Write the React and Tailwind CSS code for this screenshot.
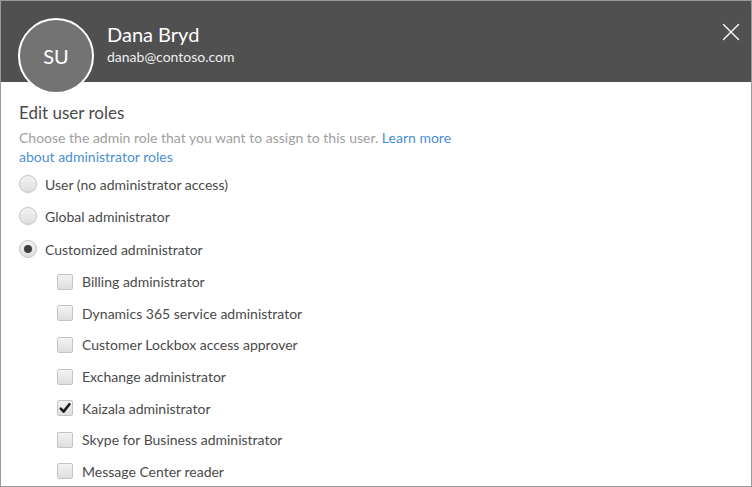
import { X } from 'lucide-react';

const roles = [
  { label: 'User (no administrator access)', checked: false },
  { label: 'Global administrator', checked: false },
  { label: 'Customized administrator', checked: true },
];

const perms = [
  { label: 'Billing administrator', checked: false },
  { label: 'Dynamics 365 service administrator', checked: false },
  { label: 'Customer Lockbox access approver', checked: false },
  { label: 'Exchange administrator', checked: false },
  { label: 'Kaizala administrator', checked: true },
  { label: 'Skype for Business administrator', checked: false },
  { label: 'Message Center reader', checked: false },
];

function Radio({ checked }) {
  return (
    <span className="w-[18px] h-[18px] rounded-full border border-[#c4c4c4] bg-gradient-to-b from-[#f3f3f3] to-[#dedede] flex items-center justify-center shrink-0">
      {checked && <span className="w-[8px] h-[8px] rounded-full bg-[#3f3f3f]" />}
    </span>
  );
}

function Checkbox({ checked }) {
  return (
    <span className="w-[16px] h-[16px] rounded-[2px] border border-[#c4c4c4] bg-gradient-to-b from-[#f3f3f3] to-[#dedede] flex items-center justify-center shrink-0">
      {checked && (
        <svg width="12" height="12" viewBox="0 0 12 12">
          <path d="M1.8 6.6 L4.6 9.6 L10.4 2.2" fill="none" stroke="#1e1e1e" strokeWidth="2.6" strokeLinecap="round" strokeLinejoin="round" />
        </svg>
      )}
    </span>
  );
}

export default function App() {
  return (
    <div
      className="w-[752px] h-[487px] border border-[#9a9a9a] bg-white overflow-hidden relative"
      style={{ fontFamily: 'Lato, "Open Sans", sans-serif' }}
    >
      <header className="h-[81px] bg-[#505050] relative flex items-start">
        <div className="absolute left-[17px] top-[17px] w-[76px] h-[76px] rounded-full bg-[#737373] border-2 border-white flex items-center justify-center text-white text-[20px] z-10">
          SU
        </div>
        <div className="pl-[106px] pt-[20px] text-white">
          <div className="text-[20px] leading-[26px]">Dana Bryd</div>
          <div className="text-[14px] leading-[20px] text-[#eeeeee]">danab@contoso.com</div>
        </div>
        <button className="ml-auto mr-[5px] mt-[16px] text-white">
          <X size={30} strokeWidth={1.1} />
        </button>
      </header>

      <main className="pl-[18px] pt-[19px]">
        <h2 className="text-[17px] leading-[24px] text-[#4a4a4a]">Edit user roles</h2>
        <p className="mt-[3px] w-[440px] text-[14px] leading-[19px] text-[#a0a0a0]">
          Choose the admin role that you want to assign to this user.{' '}
          <a className="text-[#4a8fd3]">Learn more about administrator roles</a>
        </p>

        <div className="mt-[2px] flex flex-col">
          {roles.map((r, i) => (
            <label
              key={r.label}
              className={`flex items-center gap-[8px] text-[14px] text-[#4a4a4a] ${i === 2 ? 'h-[34px]' : 'h-[32px]'}`}
            >
              <Radio checked={r.checked} />
              {r.label}
            </label>
          ))}
        </div>

        <div className="flex flex-col pl-[38px]">
          {perms.map((p) => (
            <label key={p.label} className="flex items-center gap-[9px] h-[31.6px] text-[14px] text-[#4a4a4a]">
              <Checkbox checked={p.checked} />
              {p.label}
            </label>
          ))}
        </div>
      </main>
    </div>
  );
}
